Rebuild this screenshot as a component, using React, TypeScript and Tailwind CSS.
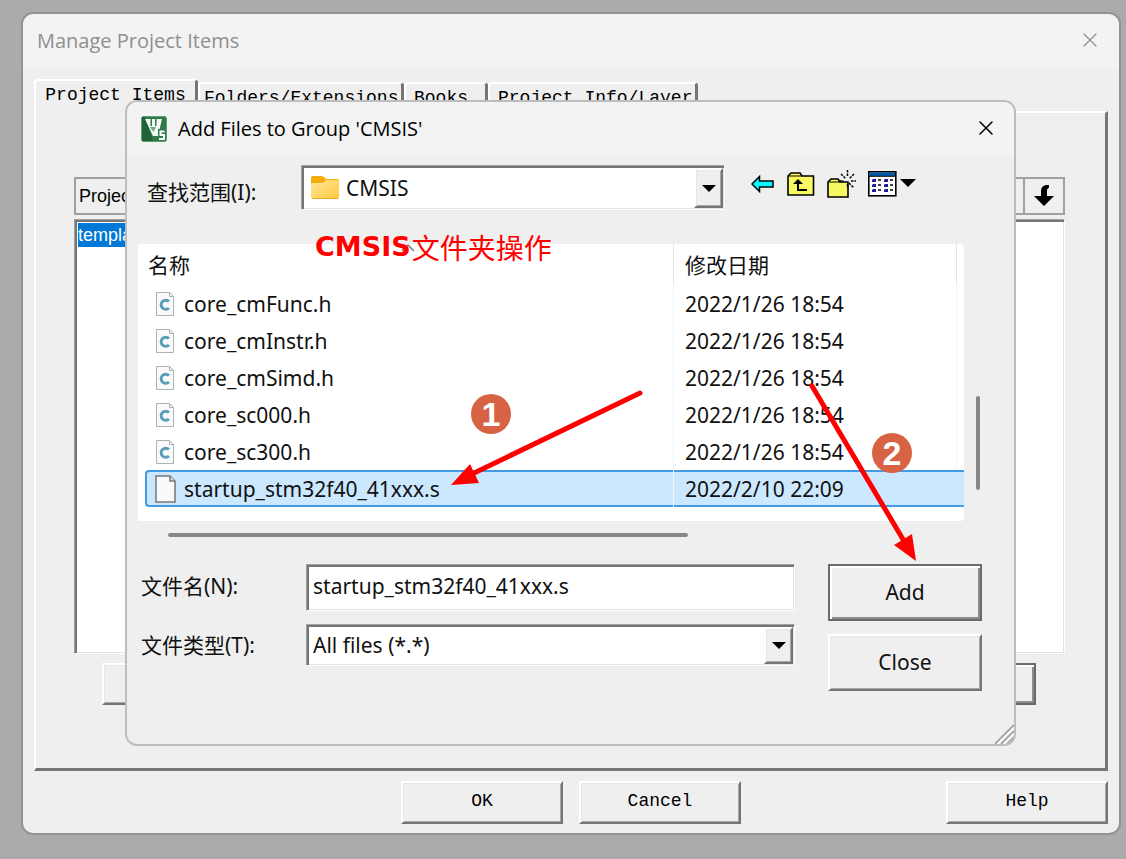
import type { ReactNode } from 'react';
import { X } from 'lucide-react';

const files = [
  { name: 'core_cmFunc.h', date: '2022/1/26 18:54', header: true },
  { name: 'core_cmInstr.h', date: '2022/1/26 18:54', header: true },
  { name: 'core_cmSimd.h', date: '2022/1/26 18:54', header: true },
  { name: 'core_sc000.h', date: '2022/1/26 18:54', header: true },
  { name: 'core_sc300.h', date: '2022/1/26 18:54', header: true },
  { name: 'startup_stm32f40_41xxx.s', date: '2022/2/10 22:09', header: false },
];

const tabs = [
  { label: 'Folders/Extensions', width: 'w-[206px] pl-1' },
  { label: 'Books', width: 'w-[84px] pl-2' },
  { label: 'Project Info/Layer', width: 'w-[210px] pl-2' },
];

const raised =
  'border-2 border-t-white border-l-white border-r-[#757575] border-b-[#757575] shadow-[inset_1px_1px_#e6e6e6,inset_-1px_-1px_#a6a6a6]';
const raisedDefault =
  'border-2 border-t-[#6c6c6c] border-l-[#6c6c6c] border-r-[#696969] border-b-[#696969] shadow-[inset_2px_2px_#ffffff,inset_-2px_-2px_#8c8c8c]';
const sunken =
  'border border-t-[#a0a0a0] border-l-[#a0a0a0] border-r-white border-b-white bg-white shadow-[inset_2px_2px_#757575,inset_-1px_-1px_#e3e3e3]';

function ClassicButton({ children, className = '' }: { children: ReactNode; className?: string }) {
  return (
    <button type="button" className={`h-[43px] w-[162px] bg-[#efefef] pb-1 ${raised} ${className}`}>
      {children}
    </button>
  );
}

function DropArrow() {
  return (
    <span
      aria-hidden="true"
      className={`pointer-events-none absolute top-[3px] right-[2px] bottom-[2px] flex w-[29px] items-center justify-center bg-[#efefef] ${raised}`}
    >
      <svg width="14" height="7" viewBox="0 0 14 7">
        <path d="M0 0h14L7 7z" fill="#000" />
      </svg>
    </span>
  );
}

function KeilIcon() {
  return (
    <svg width="26" height="26" viewBox="0 0 26 26" aria-hidden="true">
      <rect x="0.5" y="0.5" width="25" height="25" rx="2" fill="#2f7a48" stroke="#5f9a72" />
      <path d="M1 1h3l8 24H1z" fill="#1f6438" />
      <path d="M4 3h17l-4 17h-5z" fill="#f4f8f5" />
      <path d="M9.500 3h1.500v7h-1.500zM14 3h1.500v7h-1.500z" fill="#2f7a48" />
      <path d="M9 11h6l-2.500 5z" fill="#6fa982" />
      <path d="M17 13h8v12h-8z" fill="#2f7a48" />
      <path d="M23.500 15.500h-4v3.500h3.500v4H18" fill="none" stroke="#fff" strokeWidth="2" />
    </svg>
  );
}

function FolderIcon() {
  return (
    <svg width="28" height="24" viewBox="0 0 28 24" aria-hidden="true">
      <defs>
        <linearGradient id="folder" x1="0" y1="0" x2="1" y2="1">
          <stop offset="0" stopColor="#ffe69a" />
          <stop offset="1" stopColor="#ffc93c" />
        </linearGradient>
      </defs>
      <path d="M0 2q0-2 2-2h8q2 0 3 1l2 2h11q2 0 2 2v4H0z" fill="#f5ad0c" />
      <path d="M0 8q0-1 2-1h9q1 0 2-1l2-2h11q2 0 2 2v15q0 2-2 2H2q-2 0-2-2z" fill="url(#folder)" />
      <path d="M1 22.500h26" stroke="#eaa61c" />
    </svg>
  );
}

function HeaderFileIcon() {
  return (
    <svg width="20" height="24" viewBox="0 0 20 24" aria-hidden="true">
      <path d="M1.500 0.500h13l4 4v19h-17z" fill="#fafafa" stroke="#a9b3b3" />
      <path d="M14.500 0.500v4h4" fill="none" stroke="#a9b3b3" />
      <path d="M14 9.500A4.600 4.600 0 1 0 14 16" fill="none" stroke="#5a9db8" strokeWidth="3" />
    </svg>
  );
}

function PlainFileIcon() {
  return (
    <svg width="21" height="28" viewBox="0 0 21 28" aria-hidden="true">
      <path d="M1 1h14l5 5v21H1z" fill="#fafafa" stroke="#777" strokeWidth="1.500" />
      <path d="M15 1v5h5" fill="#ddd" stroke="#777" strokeWidth="1.500" />
    </svg>
  );
}

function BackIcon() {
  return (
    <svg width="23" height="18" viewBox="0 0 23 18" aria-hidden="true">
      <path d="M1 9L8.500 1.500V6H22v6H8.500v4.500z" fill="#00ffff" stroke="#000" strokeWidth="1.500" />
    </svg>
  );
}

function YellowPattern({ id }: { id: string }) {
  return (
    <pattern id={id} width="4" height="4" patternUnits="userSpaceOnUse">
      <rect width="4" height="4" fill="#fbf83a" />
      <path d="M0 0h2v2H0zM2 2h2v2H2z" fill="#f7f78c" />
    </pattern>
  );
}

function UpIcon() {
  return (
    <svg width="28" height="24" viewBox="0 0 28 24" aria-hidden="true">
      <defs>
        <YellowPattern id="up" />
      </defs>
      <path d="M1 23V4l3-3h9l2 3h11.500v19z" fill="url(#up)" stroke="#000" strokeWidth="1.600" />
      <path d="M2 4h13" stroke="#000" />
      <path d="M11 9v9h9" fill="none" stroke="#000" strokeWidth="2" />
      <path d="M6 12l5-5 5 5z" fill="#000" />
    </svg>
  );
}

function NewFolderIcon() {
  return (
    <svg width="29" height="28" viewBox="0 0 29 28" aria-hidden="true">
      <defs>
        <YellowPattern id="newdir" />
      </defs>
      <path d="M1 27V12l3-3h7l2 3h8v15z" fill="url(#newdir)" stroke="#000" strokeWidth="1.600" />
      <path d="M2 12h11" stroke="#000" />
      <path d="M20.500 0v7M20.500 14v4M13 11h4M24 11h5M14 4l5 5M22 13l5 5M27 4l-5 5" stroke="#000" strokeWidth="1.500" strokeDasharray="2.500 1" />
    </svg>
  );
}

function ViewIcon() {
  return (
    <svg width="49" height="26" viewBox="0 0 49 26" aria-hidden="true">
      <rect x="0.800" y="0.800" width="27" height="24" fill="#fff" stroke="#000" strokeWidth="1.600" />
      <path d="M1.500 1.500h25.500v3.500H1.500z" fill="#0058a8" />
      <path d="M1 5.300h27" stroke="#000" />
      <path d="M5 8h3v3H4V9zM5 13h3v3H4v-2zM5 18h3v3H4v-2zM17 8h3v3h-4V9zM17 13h3v3h-4v-2zM17 18h3v3h-4v-2z" fill="#1c1c9c" />
      <path d="M10 9h3M10 14h3M10 19h3M22 9h3M22 14h3M22 19h3" stroke="#000" strokeWidth="1.500" />
      <path d="M32 8h16l-8 8z" fill="#000" />
    </svg>
  );
}

function DownIcon() {
  return (
    <svg width="20" height="22" viewBox="0 0 20 22" aria-hidden="true">
      <path d="M0 11h7V6q0-5 5-6h3v3q-2 0-2 3v5h7L10 21z" fill="#000" />
    </svg>
  );
}

function ProjectItemsWindow() {
  return (
    <main className="flex flex-1 flex-col rounded-xl border-2 border-[#939393] bg-[#efefef] font-['Liberation_Mono',monospace] text-lg leading-6">
      <header className="flex h-[54px] items-center justify-between rounded-t-xl bg-[#f3f3f3] pr-[17px] pl-[14px] font-['Open_Sans',sans-serif] text-[20px] text-[#8f8f8f]">
        <h1>Manage Project Items</h1>
        <button type="button" aria-label="Close Manage Project Items" className="pb-[2px]">
          <X size={24} strokeWidth={1.2} />
        </button>
      </header>

      <div className="flex flex-1 flex-col px-[11px] pt-[11px] pb-[9px]">
        <div role="tablist" className="flex h-8 items-end">
          <button type="button" role="tab" aria-selected="true" className="relative -mb-[2px] h-[34px] w-[164px] rounded-t border-t-2 border-r-[3px] border-l-2 border-t-white border-r-[#757575] border-l-white bg-[#efefef] pb-1 text-black">
            Project Items
          </button>
          {tabs.map((tab) => (
            <button
              key={tab.label}
              type="button"
              role="tab"
              aria-selected="false"
              className={`h-[29px] rounded-t border-t-2 border-r-[3px] border-l-2 border-t-white border-r-[#757575] border-l-white text-left text-black ${tab.width}`}
            >
              {tab.label}
            </button>
          ))}
        </div>

        <section className="flex flex-1 flex-col border-t-2 border-r-[3px] border-b-[3px] border-l-2 border-t-white border-r-[#757575] border-b-[#757575] border-l-white pt-16 pr-10 pb-[63px] pl-[38px]">
          <div className="flex h-[38px] items-stretch justify-between border-2 border-[#a0a0a0] pl-[3px] font-['Liberation_Sans',sans-serif]">
            <span className="self-center text-lg">Project</span>
            <button type="button" aria-label="Move down" className="flex w-10 items-center justify-center border-l-2 border-[#a0a0a0]">
              <DownIcon />
            </button>
          </div>
          <div className={`mt-1 flex-1 p-[3px] ${sunken}`}>
            <div className="h-6 w-24 bg-[#0078d7] font-['Liberation_Sans',sans-serif] text-lg leading-6 text-white">template</div>
          </div>
          <div className="mt-[9px] flex h-[42px] justify-between pr-[29px] pl-7">
            <button type="button" aria-label="Set target" className={`w-40 ${raised}`} />
            <button type="button" aria-label="Add files" className={`w-40 ${raisedDefault}`} />
          </div>
        </section>

        <footer className="mt-[10px] grid grid-cols-[1fr_auto_1fr]">
          <div className="col-start-2 flex gap-4">
            <ClassicButton>OK</ClassicButton>
            <ClassicButton>Cancel</ClassicButton>
          </div>
          <ClassicButton className="justify-self-end">Help</ClassicButton>
        </footer>
      </div>
    </main>
  );
}

function AddFilesDialog() {
  return (
    <div
      role="dialog"
      aria-labelledby="dialog-title"
      className="absolute top-[100px] right-[110px] left-[125px] overflow-hidden rounded-xl border-2 border-[#bdbdbd] bg-[#efefef] font-['Noto_Sans','Noto_Sans_CJK_SC',sans-serif] text-[21px] leading-7 text-[#111]"
    >
      <header className="flex h-[54px] items-center bg-[#f3f3f3] pr-4 pl-[14px]">
        <KeilIcon />
        <h2 id="dialog-title" className="ml-[11px] flex-1 font-['Open_Sans',sans-serif] text-[20px] text-black">
          Add Files to Group 'CMSIS'
        </h2>
        <button type="button" aria-label="Close dialog" className="pb-[2px] text-black">
          <X size={24} strokeWidth={1.5} />
        </button>
      </header>

      <div className="flex items-center pt-[9px] pr-[97px] pl-5">
        <label htmlFor="look-in" className="w-[154px] pt-2">
          查找范围(I):
        </label>
        <div className="relative flex-1">
          <span className="pointer-events-none absolute top-[11px] left-[10px]">
            <FolderIcon />
          </span>
          <select id="look-in" className={`h-[45px] w-full appearance-none pl-11 ${sunken}`}>
            <option>CMSIS</option>
          </select>
          <DropArrow />
        </div>
        <div className="ml-[26px] flex items-center gap-3 pb-2">
          <button type="button" aria-label="Back" className="mr-px">
            <BackIcon />
          </button>
          <button type="button" aria-label="Up one level">
            <UpIcon />
          </button>
          <button type="button" aria-label="New folder">
            <NewFolderIcon />
          </button>
          <button type="button" aria-label="View">
            <ViewIcon />
          </button>
        </div>
      </div>

      <div className="mt-[34px] flex items-stretch pr-[34px] pl-[11px]">
        <div className="flex-1 rounded-r bg-white pb-[14px]">
          <table className="w-full table-fixed border-separate border-spacing-0">
            <thead>
              <tr className="h-[41px] text-left">
                <th className="border-r border-[#e5e5e5] pl-[10px] font-normal">名称</th>
                <th className="w-[283px] border-r border-[#e5e5e5] pl-[11px] font-normal">修改日期</th>
                <th className="w-[7px]" />
              </tr>
            </thead>
            <tbody>
              {files.map((file) => (
                <tr key={file.name} className="h-[37px]">
                  <td className="border-r border-[#eef5fc] p-0 pl-[7px]">
                    <div
                      className={`flex h-[37px] items-center ${
                        file.header ? 'gap-[9px] pl-[10px]' : 'gap-2 rounded-l-sm border-2 border-r-0 border-[#429ce3] bg-[#cce8ff] pl-2'
                      }`}
                    >
                      {file.header ? <HeaderFileIcon /> : <PlainFileIcon />}
                      {file.name}
                    </div>
                  </td>
                  <td
                    className={`pl-[11px] ${
                      file.header ? 'border-r border-[#eef5fc]' : 'border-y-2 border-[#429ce3] bg-[#cce8ff]'
                    }`}
                  >
                    {file.date}
                  </td>
                  <td className={file.header ? '' : 'border-y-2 border-[#429ce3] bg-[#cce8ff]'} />
                </tr>
              ))}
            </tbody>
          </table>
        </div>
        <div className="ml-3 w-1 pt-[152px]">
          <div className="h-[94px] rounded-full bg-[#868686]" />
        </div>
      </div>
      <div className="mt-3 ml-[41px] h-1 w-[520px] max-w-full rounded-full bg-[#868886]" />

      <div className="mt-[27px] flex pr-8 pb-[53px] pl-[14px]">
        <div className="flex flex-1 flex-col gap-[13px]">
          <div className="flex items-center">
            <label htmlFor="file-name" className="w-[165px] pb-1">
              文件名(N):
            </label>
            <input id="file-name" defaultValue="startup_stm32f40_41xxx.s" className={`h-[47px] min-w-0 flex-1 pb-1 pl-[6px] ${sunken}`} />
          </div>
          <div className="flex items-center">
            <label htmlFor="file-type" className="w-[165px]">
              文件类型(T):
            </label>
            <div className="relative flex-1">
              <select id="file-type" className={`h-[42px] w-full appearance-none pl-[6px] ${sunken}`}>
                <option>All files (*.*)</option>
              </select>
              <DropArrow />
            </div>
          </div>
        </div>
        <div className="ml-[33px] flex w-[154px] flex-col gap-[13px]">
          <button type="button" className={`h-[57px] pb-[2px] ${raisedDefault}`}>
            Add
          </button>
          <button type="button" className={`h-[57px] pb-[2px] ${raised}`}>
            Close
          </button>
        </div>
      </div>

      <svg className="absolute right-0 bottom-0" width="20" height="20" viewBox="0 0 20 20" aria-hidden="true">
        <path d="M1 20L20 1M7 20L20 7M13 20L20 13" stroke="#a5a5a5" strokeWidth="2" />
        <path d="M3.500 20L20 3.500M9.500 20L20 9.500" stroke="#fff" strokeWidth="1.500" />
      </svg>
    </div>
  );
}

function Badge({ value, className }: { value: number; className: string }) {
  return (
    <span
      className={`absolute flex size-10 items-center justify-center rounded-full bg-[#d86344] font-['Liberation_Sans',sans-serif] text-[34px] leading-none font-bold text-white ${className}`}
    >
      {value}
    </span>
  );
}

function Annotations() {
  return (
    <div className="pointer-events-none absolute inset-0">
      <svg className="absolute top-[229px] left-[401px]" width="13" height="24" viewBox="0 0 13 24" aria-hidden="true">
        <path d="M1 22l6-6 6 6" fill="none" stroke="#777" strokeWidth="1.500" />
      </svg>
      <p className="absolute top-[229px] left-[315px] flex items-center gap-px leading-9 whitespace-nowrap text-[#ff0000]">
        <span className="font-['DejaVu_Sans',sans-serif] text-[27px] font-bold">CMSIS</span>
        <span className="font-['Noto_Sans_CJK_SC',serif] text-[28px]">文件夹操作</span>
      </p>
      <svg className="absolute top-0 left-0" width="1126" height="859" viewBox="0 0 1126 859" aria-hidden="true">
        <g stroke="#ff0000" strokeWidth="5" strokeLinecap="round">
          <path d="M640 393L472 474" />
          <path d="M812 386L904 541" />
        </g>
        <path d="M451 485l19-21 9 19zM916 561l-22-16 18-11z" fill="#ff0000" />
      </svg>
      <Badge value={1} className="top-[394px] left-[471px]" />
      <Badge value={2} className="top-[433px] left-[872px]" />
    </div>
  );
}

export default function App() {
  return (
    <div className="relative flex min-h-screen flex-col bg-[#ababab] pt-3 pr-[5px] pb-6 pl-[21px]">
      <ProjectItemsWindow />
      <AddFilesDialog />
      <Annotations />
    </div>
  );
}
